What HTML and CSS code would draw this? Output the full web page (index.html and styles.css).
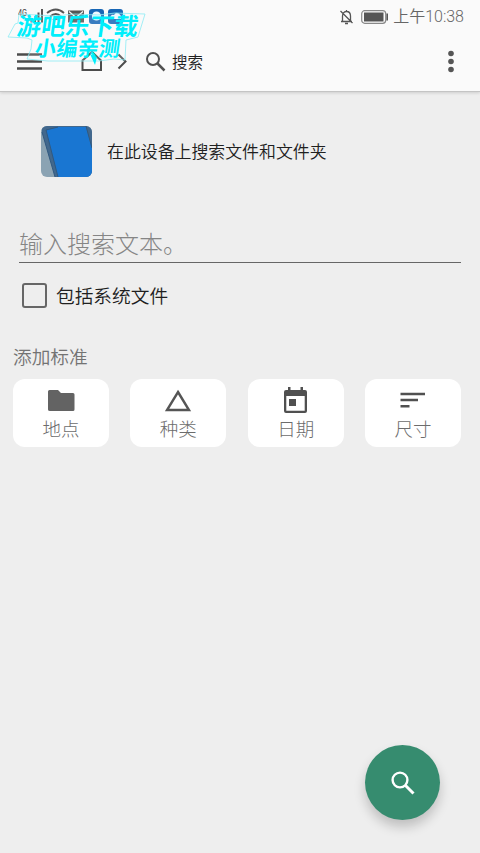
FILE: index.html
```html
<!DOCTYPE html>
<html lang="zh-CN">
<head>
<meta charset="utf-8">
<title>搜索</title>
<link rel="stylesheet" href="styles.css">
</head>
<body>
<header class="header">
  <div class="status">
    <svg class="status-left" width="108" height="18" viewBox="0 0 108 18">
      <text class="network" x="0" y="9.500" textLength="9" lengthAdjust="spacingAndGlyphs">4G</text>
      <path d="M13.500 16.500v-4M17 16.500V10M20.500 16.500V6.500M24 16.500V3" stroke="#555" stroke-width="2"/>
      <path d="M29 7q9-7 17 0M32 10.500q6-5 11 0M35 14q3-3 5 0" fill="none" stroke="#555" stroke-width="1.800"/>
      <path d="M50 4.500h16v12H50z" fill="#555"/>
      <path d="M51 5.500l7 6 7-6" fill="none" stroke="#fafafa" stroke-width="1.300"/>
      <rect x="71" y="3" width="15" height="15" rx="3" fill="#1766b5"/>
      <circle cx="78.500" cy="10" r="4.500" fill="#eef8ff"/>
      <rect x="90" y="3" width="15" height="15" rx="3" fill="#1766b5"/>
      <path d="M92 12q1-4 4-3 3-5 7 1v3H93z" fill="#eef8ff"/>
    </svg>
    <div class="status-right">
      <svg width="16" height="16" viewBox="0 0 16 16" fill="none" stroke="#555" stroke-width="1.300">
        <path d="M2 12.500h11M3.500 12V7c0-6 8-6 8 0v5M7.500 2.500V1M6 14.500h3M1.500 2l12 12"/>
      </svg>
      <svg class="battery" width="28" height="14" viewBox="0 0 28 14">
        <rect x=".7" y=".7" width="24" height="12.600" rx="3" fill="none" stroke="#888" stroke-width="1.200"/>
        <rect x="3" y="2.500" width="19.500" height="9" fill="#555"/>
        <path d="M26.200 3.500v7" stroke="#555" stroke-width="1.600"/>
      </svg>
      <span class="clock">上午10:38</span>
    </div>
  </div>
  <nav class="nav">
    <svg class="menu" width="26" height="18" viewBox="0 0 26 18"><path d="M0 1.500h25M0 8.500h25M0 15.500h25" stroke="#4c4c4c" stroke-width="2.300"/></svg>
    <svg class="home" width="22" height="21" viewBox="0 0 22 21"><path d="M1.500 19V9.500L11 1l9 8.500V19z" fill="none" stroke="#4c4c4c" stroke-width="2"/></svg>
    <svg class="chevron" width="11" height="18" viewBox="0 0 11 18"><path d="M1.500 1.500L8.500 8.500l-7 7" fill="none" stroke="#4c4c4c" stroke-width="2"/></svg>
    <svg class="find" width="20" height="20" viewBox="0 0 20 20" fill="none" stroke="#505050"><circle cx="7" cy="7" r="6" stroke-width="2"/><path d="M11.500 11.500l7 7" stroke-width="2.500"/></svg>
    <span class="nav-title">搜索</span>
    <svg class="more" width="8" height="24" viewBox="0 0 8 24" fill="#555"><circle cx="4" cy="3.500" r="2.800"/><circle cx="4" cy="11.500" r="2.800"/><circle cx="4" cy="19.500" r="2.800"/></svg>
  </nav>
  <svg class="stamp" width="154" height="72" viewBox="0 0 154 72">
    <path d="M19 14L55 16 75 14 98 15 115 13 145 14 138 37 126 40 125 60 114 59 99 61 48 61 27 59 31 49 32 40 27 38 8 37 15 24 18 23z" fill="#fff" fill-opacity=".15" stroke="#8cebf4" stroke-width=".8"/>
    <g transform="skewX(-8)">
      <text class="stamp-main" x="21" y="35.500" textLength="121">游吧乐下载</text>
      <text class="stamp-sub" x="42" y="56.500" textLength="85">小编亲测</text>
    </g>
    <path d="M90 54l7 3-2 8z" fill="#00effc"/>
  </svg>
</header>
<main class="page">
  <section class="intro">
    <svg width="51" height="51" viewBox="0 0 51 51">
      <defs><clipPath id="tile"><rect width="51" height="51" rx="6"/></clipPath></defs>
      <g clip-path="url(#tile)">
        <path d="M0 0h51v51H0z" fill="#8ba3b3"/>
        <path d="M0 0h51v51H14L1 6z" fill="#42688d"/>
        <path d="M5 4l12-3h28l6 21v29H17z" fill="#1976d2"/>
        <path d="M1 6l13 45M5 4l12 47M5 4l12-3M45 0l6 22" fill="none" stroke="#315980" stroke-width="1"/>
      </g>
    </svg>
    <span class="intro-text">在此设备上搜索文件和文件夹</span>
  </section>
  <div class="field">输入搜索文本。</div>
  <div class="option"><span class="box"></span><span class="option-text">包括系统文件</span></div>
  <h2 class="heading">添加标准</h2>
  <div class="cards">
    <div class="card">
      <svg width="28" height="28" viewBox="0 0 28 28"><path d="M2.500 3h8.500l3 3h12q1.500 0 1.500 1.500v15q0 1.500-1.500 1.500h-23Q1 24 1 22.500v-18Q1 3 2.500 3z" fill="#636363"/></svg>
      <span>地点</span>
    </div>
    <div class="card">
      <svg width="28" height="28" viewBox="0 0 28 28"><path d="M14 5l11 18H3z" fill="none" stroke="#555" stroke-width="2.400"/></svg>
      <span>种类</span>
    </div>
    <div class="card">
      <svg width="28" height="28" viewBox="0 0 28 28" fill="#505050"><path d="M4 3h2V0h2.500v3h10V0H21v3h2q2 0 2 2v19q0 2-2 2H4q-2 0-2-2V5q0-2 2-2zm.3 6v14.700h18.400V9z" fill-rule="evenodd"/><path d="M7 12h7v7H7z"/></svg>
      <span>日期</span>
    </div>
    <div class="card">
      <svg width="28" height="28" viewBox="0 0 28 28"><path d="M1.500 7H26M1.500 13H19M1.500 19.200h9" stroke="#505050" stroke-width="2.500"/></svg>
      <span>尺寸</span>
    </div>
  </div>
</main>
<div class="fab">
  <svg width="24" height="24" viewBox="0 0 24 24" fill="none" stroke="#fff"><circle cx="9" cy="9" r="7.400" stroke-width="2.400"/><path d="M14.500 14.500l8 8" stroke-width="3"/></svg>
</div>
</body>
</html>
```
FILE: styles.css
```css
* { box-sizing: border-box; }
body {
  margin: 0;
  height: 853px;
  overflow: hidden;
  background: #eee;
  color: #202020;
  font-family: Roboto, "Noto Sans CJK SC", sans-serif;
  font-weight: 350;
}
svg { display: block; flex: none; }
.header {
  position: relative;
  height: 92px;
  background: #fafafa;
  border-bottom: 1px solid #c4c4c4;
  box-shadow: 0 1px 3px rgba(0, 0, 0, .14);
}
.status {
  display: flex;
  justify-content: space-between;
  height: 32px;
  padding: 6px 16px 0 18px;
}
.network { font-size: 8.5px; font-weight: 400; fill: #444; }
.status-right { display: flex; align-items: center; height: 21px; color: #666; }
.battery { margin: 0 4px 0 6px; }
.clock { font-size: 16px; line-height: 21px; white-space: nowrap; }
.nav { display: flex; align-items: center; height: 59px; padding: 0 25px 0 17px; }
.home { margin-left: 38px; }
.chevron { margin-left: 14px; }
.find { margin-left: 18px; }
.nav-title { margin-left: 6px; padding-top: 3px; font-size: 15.5px; line-height: 24px; }
.more { margin-left: auto; }
.stamp { position: absolute; left: 0; top: 0; }
.stamp-main, .stamp-sub { font-family: "Noto Sans CJK SC", sans-serif; font-weight: 700; fill: #00effc; }
.stamp-main { font-size: 24px; }
.stamp-sub { font-size: 21px; }
.page { padding: 34px 19px 0 13px; }
.intro {
  display: flex;
  align-items: center;
  gap: 15px;
  height: 51px;
  margin-left: 28px;
  font-size: 16.9px;
}
.intro-text { padding-bottom: 3px; }
.field {
  height: 57px;
  margin: 29px 0 0 6px;
  padding-top: 22px;
  border-bottom: 1px solid #666;
  color: #858585;
  font-size: 24px;
  font-weight: 300;
  line-height: 34px;
}
.option {
  display: flex;
  align-items: center;
  gap: 9px;
  height: 26px;
  margin: 19px 0 0 9px;
  font-size: 18.7px;
}
.option-text { padding-bottom: 2px; }
.box { width: 25px; height: 25px; border: 2px solid #666; border-radius: 3px; }
.heading { margin: 36px 0 0; color: #737373; font-size: 18.7px; font-weight: 350; line-height: 28px; }
.cards { display: grid; grid-template-columns: repeat(4, 96px); justify-content: space-between; margin-top: 7px; }
.card {
  display: flex;
  flex-direction: column;
  align-items: center;
  height: 68px;
  padding-top: 8px;
  border-radius: 12px;
  background: #fff;
  color: #6c6c6c;
  font-size: 18.5px;
  font-weight: 300;
  line-height: 31px;
}
.fab {
  position: absolute;
  left: 365px;
  top: 745px;
  display: grid;
  place-items: center;
  width: 75px;
  height: 75px;
  border-radius: 50%;
  background: #368c6f;
  box-shadow: 0 7px 12px rgba(0, 0, 0, .2);
}
```
